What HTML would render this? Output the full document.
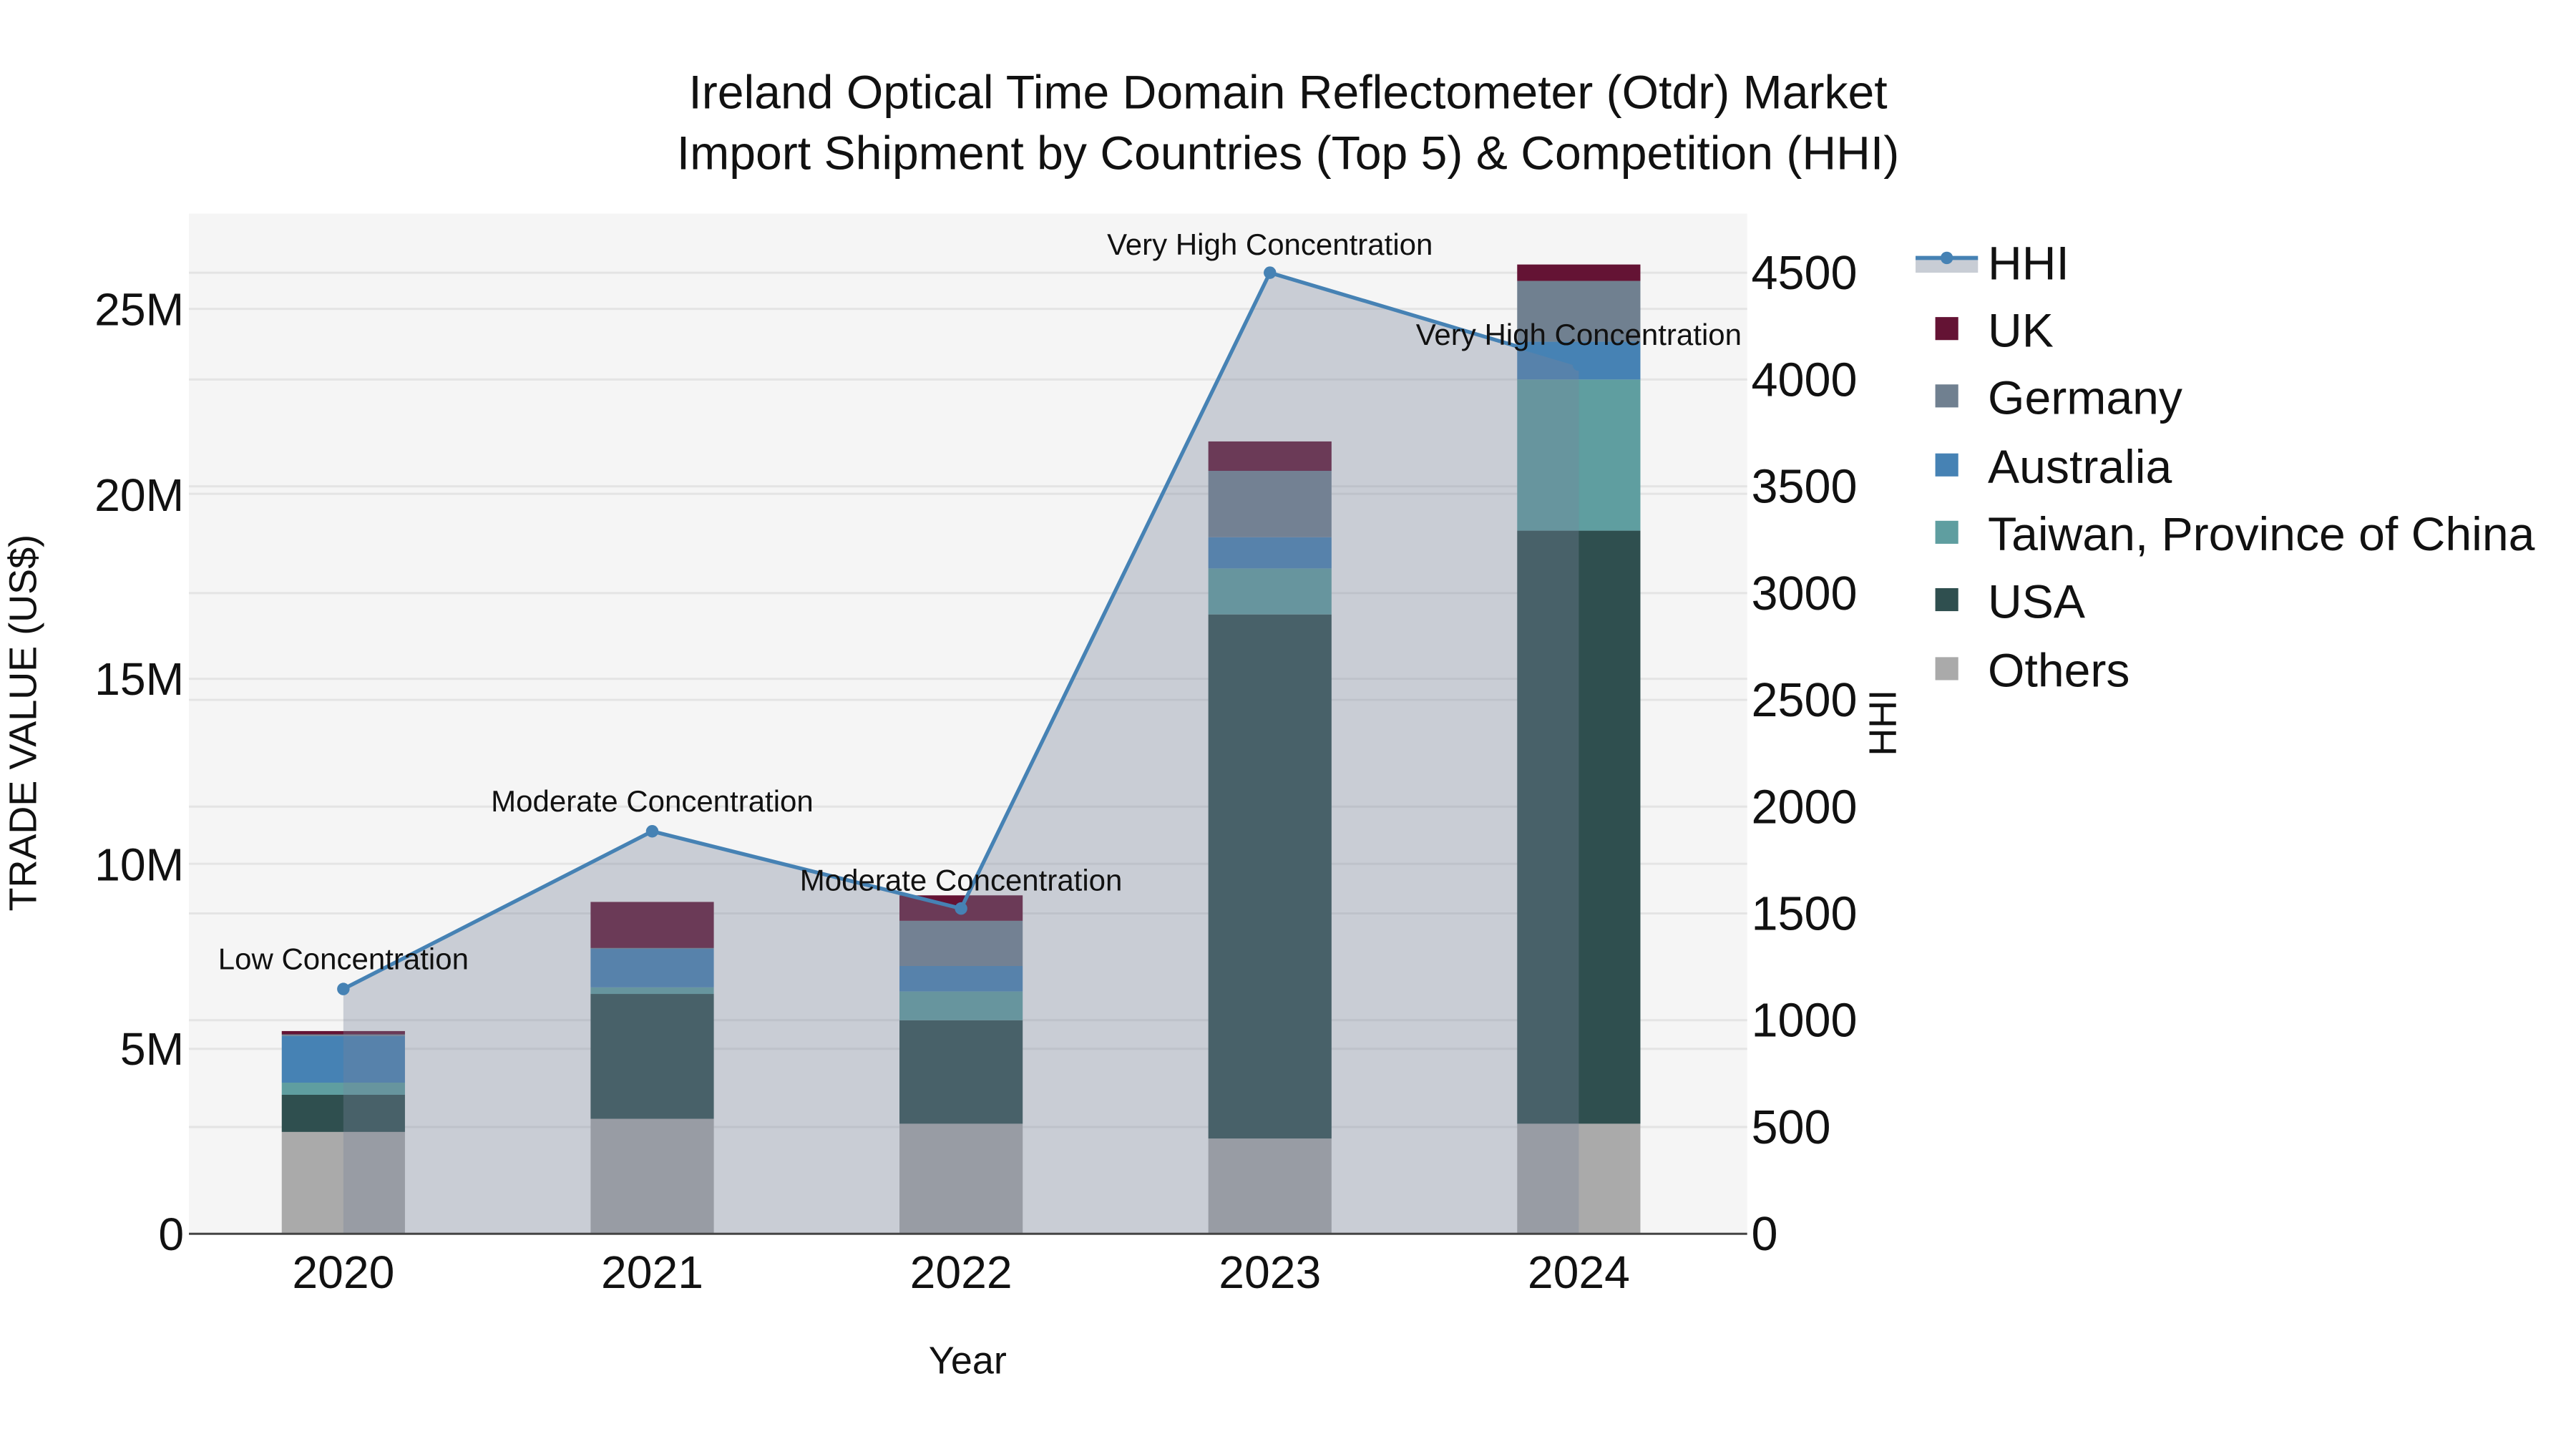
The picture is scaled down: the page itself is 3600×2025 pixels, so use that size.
<!DOCTYPE html>
<html><head><meta charset="utf-8"><style>
html,body{margin:0;padding:0;background:#fff;}
svg{display:block;}
text{font-family:"Liberation Sans",sans-serif;fill:#111;}
</style></head><body>
<svg width="3600" height="2025" viewBox="0 0 1568 882" xmlns="http://www.w3.org/2000/svg">
<rect x="0" y="0" width="1568" height="882" fill="#fff"/>
<rect x="115" y="130" width="948.5" height="621" fill="#f5f5f5"/>
<g stroke="#e4e4e4" stroke-width="1.3">
<line x1="115" x2="1063.5" y1="638.4" y2="638.4"/>
<line x1="115" x2="1063.5" y1="525.8" y2="525.8"/>
<line x1="115" x2="1063.5" y1="413.2" y2="413.2"/>
<line x1="115" x2="1063.5" y1="300.6" y2="300.6"/>
<line x1="115" x2="1063.5" y1="188" y2="188"/>
<line x1="115" x2="1063.5" y1="686" y2="686"/>
<line x1="115" x2="1063.5" y1="621" y2="621"/>
<line x1="115" x2="1063.5" y1="556" y2="556"/>
<line x1="115" x2="1063.5" y1="491" y2="491"/>
<line x1="115" x2="1063.5" y1="426" y2="426"/>
<line x1="115" x2="1063.5" y1="361" y2="361"/>
<line x1="115" x2="1063.5" y1="296" y2="296"/>
<line x1="115" x2="1063.5" y1="231" y2="231"/>
<line x1="115" x2="1063.5" y1="166" y2="166"/>
</g>
<g>
<rect x="171.5" y="689" width="75" height="62" fill="#aaaaaa"/>
<rect x="171.5" y="666.4" width="75" height="22.6" fill="#2f4f4f"/>
<rect x="171.5" y="659" width="75" height="7.4" fill="#5f9ea0"/>
<rect x="171.5" y="630.6" width="75" height="28.4" fill="#4682b4"/>
<rect x="171.5" y="629.6" width="75" height="1" fill="#708090"/>
<rect x="171.5" y="627.6" width="75" height="2" fill="#641334"/>
<rect x="359.5" y="681" width="75" height="70" fill="#aaaaaa"/>
<rect x="359.5" y="605" width="75" height="76" fill="#2f4f4f"/>
<rect x="359.5" y="601" width="75" height="4" fill="#5f9ea0"/>
<rect x="359.5" y="577.5" width="75" height="23.5" fill="#4682b4"/>
<rect x="359.5" y="576.8" width="75" height="0.8" fill="#708090"/>
<rect x="359.5" y="549" width="75" height="28" fill="#641334"/>
<rect x="547.5" y="684" width="75" height="67" fill="#aaaaaa"/>
<rect x="547.5" y="621" width="75" height="63" fill="#2f4f4f"/>
<rect x="547.5" y="603.5" width="75" height="17.5" fill="#5f9ea0"/>
<rect x="547.5" y="588" width="75" height="15.5" fill="#4682b4"/>
<rect x="547.5" y="560.5" width="75" height="27.5" fill="#708090"/>
<rect x="547.5" y="545" width="75" height="15.5" fill="#641334"/>
<rect x="735.5" y="693" width="75" height="58" fill="#aaaaaa"/>
<rect x="735.5" y="374" width="75" height="319" fill="#2f4f4f"/>
<rect x="735.5" y="346" width="75" height="28" fill="#5f9ea0"/>
<rect x="735.5" y="327" width="75" height="19" fill="#4682b4"/>
<rect x="735.5" y="286.6" width="75" height="40.4" fill="#708090"/>
<rect x="735.5" y="268.7" width="75" height="17.9" fill="#641334"/>
<rect x="923.5" y="684" width="75" height="67" fill="#aaaaaa"/>
<rect x="923.5" y="323" width="75" height="361" fill="#2f4f4f"/>
<rect x="923.5" y="231" width="75" height="92" fill="#5f9ea0"/>
<rect x="923.5" y="208" width="75" height="23" fill="#4682b4"/>
<rect x="923.5" y="171" width="75" height="37" fill="#708090"/>
<rect x="923.5" y="161" width="75" height="10" fill="#641334"/>
</g>
<polygon points="209,602 397,506 585,553 773,166 961,222 961,751 209,751" fill="rgb(120,131,154)" fill-opacity="0.35"/>
<polyline points="209,602 397,506 585,553 773,166 961,222" fill="none" stroke="#4682b4" stroke-width="2.3"/>
<g fill="#4682b4">
<circle cx="209" cy="602" r="3.8"/><circle cx="397" cy="506" r="3.8"/><circle cx="585" cy="553" r="3.8"/><circle cx="773" cy="166" r="3.8"/><circle cx="961" cy="222" r="3.8"/>
</g>
<line x1="115" x2="1063.5" y1="751" y2="751" stroke="#444" stroke-width="1.3"/>
<g font-size="18.3" text-anchor="middle">
<text x="209" y="590">Low Concentration</text>
<text x="397" y="494">Moderate Concentration</text>
<text x="585" y="542">Moderate Concentration</text>
<text x="773" y="155">Very High Concentration</text>
<text x="961" y="210">Very High Concentration</text>
</g>
<g font-size="28.8" text-anchor="middle">
<text x="784" y="66">Ireland Optical Time Domain Reflectometer (Otdr) Market</text>
<text x="784" y="103">Import Shipment by Countries (Top 5) &amp; Competition (HHI)</text>
</g>
<g font-size="28" text-anchor="end">
<text x="112" y="761">0</text>
<text x="112" y="648">5M</text>
<text x="112" y="536">10M</text>
<text x="112" y="423">15M</text>
<text x="112" y="311">20M</text>
<text x="112" y="198">25M</text>
</g>
<g font-size="29" text-anchor="start">
<text x="1066" y="761">0</text>
<text x="1066" y="696">500</text>
<text x="1066" y="631">1000</text>
<text x="1066" y="566">1500</text>
<text x="1066" y="501">2000</text>
<text x="1066" y="436">2500</text>
<text x="1066" y="371">3000</text>
<text x="1066" y="306">3500</text>
<text x="1066" y="241">4000</text>
<text x="1066" y="176">4500</text>
</g>
<g font-size="28" text-anchor="middle">
<text x="209" y="784">2020</text>
<text x="397" y="784">2021</text>
<text x="585" y="784">2022</text>
<text x="773" y="784">2023</text>
<text x="961" y="784">2024</text>
</g>
<text x="589" y="836" font-size="23.5" text-anchor="middle">Year</text>
<text transform="translate(22,440) rotate(-90)" font-size="23.5" text-anchor="middle">TRADE VALUE (US$)</text>
<text transform="translate(1154,440) rotate(-90)" font-size="23.5" text-anchor="middle">HHI</text>
<rect x="1166" y="158" width="38" height="8" fill="#c8cdd5"/>
<line x1="1166" x2="1204" y1="157" y2="157" stroke="#4682b4" stroke-width="2.5"/>
<circle cx="1185" cy="157" r="3.8" fill="#4682b4"/>
<rect x="1178" y="193" width="14" height="14" fill="#641334"/>
<rect x="1178" y="234" width="14" height="14" fill="#708090"/>
<rect x="1178" y="276" width="14" height="14" fill="#4682b4"/>
<rect x="1178" y="317" width="14" height="14" fill="#5f9ea0"/>
<rect x="1178" y="358" width="14" height="14" fill="#2f4f4f"/>
<rect x="1178" y="400" width="14" height="14" fill="#aaaaaa"/>
<g font-size="28.8">
<text x="1210" y="170">HHI</text>
<text x="1210" y="211">UK</text>
<text x="1210" y="252">Germany</text>
<text x="1210" y="294">Australia</text>
<text x="1210" y="335">Taiwan, Province of China</text>
<text x="1210" y="376">USA</text>
<text x="1210" y="418">Others</text>
</g>
</svg>
</body></html>
